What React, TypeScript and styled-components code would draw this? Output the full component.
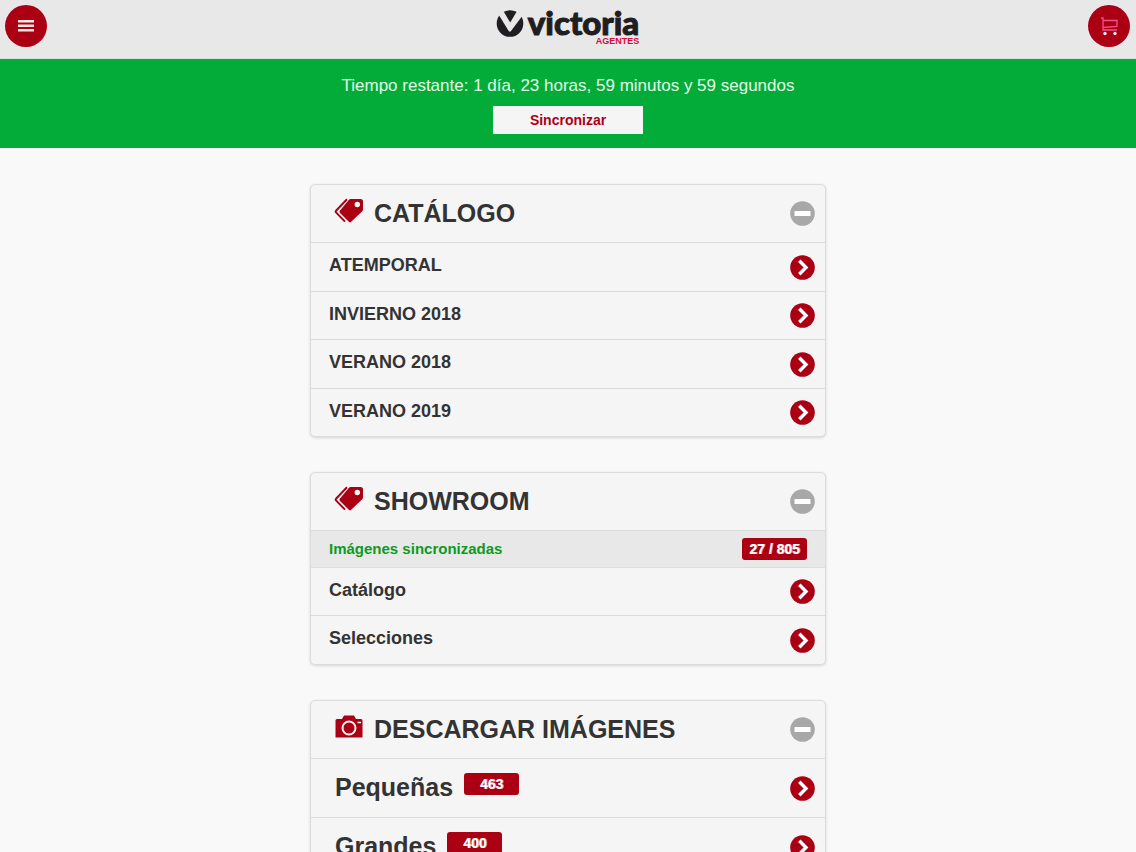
import React from 'react';
import styled, { createGlobalStyle } from 'styled-components';

const RED = '#ab0014';

const GlobalStyle = createGlobalStyle`
  * { box-sizing: border-box; }
  body {
    margin: 0;
    background: #faf9fa;
    color: #333;
    font-family: "Liberation Sans", Arial, sans-serif;
    font-size: 17px;
  }
`;

const Header = styled.header`
  display: grid;
  grid-template-columns: 1fr auto 1fr;
  align-items: start;
  height: 59px;
  padding: 5px 6px 0 5px;
  background: #e9e8e9;
  border-bottom: 1px solid #cfe8d6;
`;

const RoundButton = styled.button<{ $end?: boolean }>`
  display: flex;
  align-items: center;
  justify-content: center;
  justify-self: ${(p) => (p.$end ? 'end' : 'start')};
  width: 42px;
  height: 42px;
  padding: 0;
  border: 0;
  border-radius: 50%;
  background: ${RED};
  cursor: pointer;
`;

const Logo = styled.a`
  display: flex;
  align-items: flex-start;
  gap: 4px;
  padding-top: 3px;
  color: #201e22;
  text-decoration: none;
`;

const LogoWords = styled.span`
  display: flex;
  flex-direction: column;
  align-items: flex-end;
`;

const LogoName = styled.span`
  font: 900 33px/28px Lato, sans-serif;
  -webkit-text-stroke: 1px #201e22;
`;

const LogoTag = styled.span`
  color: #d80a3c;
  font: 700 9px/10px "Liberation Sans", Arial, sans-serif;
`;

const Banner = styled.section`
  display: flex;
  flex-direction: column;
  align-items: center;
  gap: 10px;
  padding: 17px 16px 14px;
  background: #03ac38;
`;

const Remaining = styled.p`
  margin: 0;
  color: #e4fbe6;
  line-height: 20px;
  text-align: center;
`;

const SyncButton = styled.button`
  width: 150px;
  height: 28px;
  padding: 0;
  border: 0;
  background: #f6f5f6;
  color: ${RED};
  font: 700 14px/28px "Liberation Sans", Arial, sans-serif;
  cursor: pointer;
`;

const Main = styled.main`
  display: flex;
  flex-direction: column;
  gap: 35px;
  width: 100%;
  max-width: 516px;
  margin: 0 auto;
  padding: 36px 0;
`;

const Card = styled.section`
  overflow: hidden;
  border: 1px solid #dddcdd;
  border-radius: 5px;
  background: #f6f5f6;
  box-shadow: 0 1px 3px rgba(0, 0, 0, 0.15);
`;

const CardTitle = styled.h2`
  margin: 0;
  font-size: 25px;
  line-height: 28px;
`;

const CardToggle = styled.button`
  display: flex;
  align-items: center;
  gap: 10px;
  width: 100%;
  height: 57px;
  padding: 0 10px 0 23px;
  border: 0;
  background: none;
  color: inherit;
  font: inherit;
  text-align: left;
  cursor: pointer;
`;

const CardIcon = styled.span`
  display: flex;
  height: 32px;
`;

const Label = styled.span`
  flex: 1;
  padding-bottom: 2px;
`;

const List = styled.ul`
  margin: 0;
  padding: 0;
  list-style: none;
`;

const Item = styled.li<{ $size?: 'large' | 'status' }>`
  height: ${(p) => (p.$size === 'large' ? 59 : p.$size === 'status' ? 37 : 48)}px;
  border-top: 1px solid #dddcdd;
  ${(p) => !p.$size && '&:nth-child(odd) { height: 49px; }'}
`;

const RowLink = styled.a<{ $large?: boolean }>`
  display: flex;
  align-items: center;
  height: 100%;
  padding: 0 10px 0 ${(p) => (p.$large ? 24 : 18)}px;
  color: inherit;
  font-size: ${(p) => (p.$large ? 25 : 18)}px;
  font-weight: 700;
  line-height: 28px;
  text-decoration: none;

  ${Label} {
    display: flex;
    gap: 11px;
    padding-bottom: ${(p) => (p.$large ? 2 : 4)}px;
  }
`;

const Status = styled.div`
  display: flex;
  align-items: center;
  height: 100%;
  padding: 0 18px;
  background: #e9e8e9;
  color: #0a9c1c;
  font-size: 15px;
  font-weight: 700;
`;

const Badge = styled.span<{ $wide?: boolean }>`
  width: ${(p) => (p.$wide ? 65 : 55)}px;
  height: 22px;
  border-radius: 3px;
  background: ${RED};
  color: #fff;
  font-size: 14px;
  font-weight: 700;
  line-height: 22px;
  text-align: center;
  text-shadow: 1px 0 0 rgba(255, 255, 255, 0.6);
`;

const TagsIcon = () => (
  <svg width="30" height="26" viewBox="0 0 30 26" aria-hidden="true">
    <path
      fill={RED}
      fillRule="evenodd"
      d="M16.500 1H26.500Q29 1 29 3.500V11.500Q29 12.500 28.300 13.200L17.200 23.800Q16 25 14.800 23.800L6 15Q4.800 13.800 6 12.600L15 1.700Q15.600 1 16.500 1ZM23.300 3.800A2.700 2.700 0 1 0 23.300 9.200A2.700 2.700 0 1 0 23.300 3.800Z"
    />
    <path d="M13 1.300L2 12.800Q1.300 13.600 2 14.400L11 23.600" fill="none" stroke={RED} strokeWidth="2" />
  </svg>
);

const CameraIcon = () => (
  <svg width="30" height="26" viewBox="0 0 30 26" aria-hidden="true">
    <path fill={RED} d="M3 5H8L10 1.500H20L22 5H27Q28.500 5 28.500 6.500V23.500H1.500V6.500Q1.500 5 3 5Z" />
    <circle cx="15" cy="14" r="6.500" fill="none" stroke="#f6f5f6" strokeWidth="2" />
    <path d="M23.500 8.500H27" stroke="#f6f5f6" strokeWidth="1.600" />
  </svg>
);

const MinusIcon = () => (
  <svg width="25" height="25" viewBox="0 0 25 25" aria-hidden="true">
    <circle cx="12.500" cy="12.500" r="12.300" fill="#a9a8a9" />
    <path d="M4.500 12.500H20.500" stroke="#fff" strokeWidth="4.800" />
  </svg>
);

const ArrowIcon = () => (
  <svg width="25" height="25" viewBox="0 0 25 25" aria-hidden="true">
    <circle cx="12.500" cy="12.500" r="12.300" fill={RED} />
    <path d="M9.300 5.700L16 12.500L9.300 19.300" fill="none" stroke="#fff" strokeWidth="3.400" />
  </svg>
);

const MenuIcon = () => (
  <svg width="16" height="14" viewBox="0 0 16 14" aria-hidden="true">
    <path d="M0 2.200H16M0 6.700H16M0 11.200H16" stroke="#fbe6e2" strokeWidth="2.400" />
  </svg>
);

const CartIcon = () => (
  <svg width="20" height="20" viewBox="0 0 20 20" aria-hidden="true">
    <path
      d="M2 2H4V14H18M4 4.500H18V10.500L4 11.500"
      fill="none"
      stroke="#f0508a"
      strokeWidth="1.300"
    />
    <circle cx="6" cy="17.500" r="1.700" fill="#ffe0e8" />
    <circle cx="16" cy="17.500" r="1.700" fill="#ffe0e8" />
  </svg>
);

const LogoMark = () => (
  <svg width="28" height="30" viewBox="0 0 28 30" aria-hidden="true">
    <circle cx="14" cy="15.500" r="13.300" fill="#201e22" />
    <path fill="#e9e8e9" d="M1 4L13 23.500H14.600L27 7V0H2Z" />
    <path fill="#201e22" d="M7.800 3.800Q14 0.600 20.600 3.800L14.200 14.500Z" />
  </svg>
);

type Row = { label: string; count?: number };
type Section = {
  title: string;
  icon: React.ReactNode;
  status?: { label: string; value: string };
  large?: boolean;
  rows: Row[];
};

const sections: Section[] = [
  {
    title: 'CATÁLOGO',
    icon: <TagsIcon />,
    rows: [
      { label: 'ATEMPORAL' },
      { label: 'INVIERNO 2018' },
      { label: 'VERANO 2018' },
      { label: 'VERANO 2019' },
    ],
  },
  {
    title: 'SHOWROOM',
    icon: <TagsIcon />,
    status: { label: 'Imágenes sincronizadas', value: '27 / 805' },
    rows: [{ label: 'Catálogo' }, { label: 'Selecciones' }],
  },
  {
    title: 'DESCARGAR IMÁGENES',
    icon: <CameraIcon />,
    large: true,
    rows: [
      { label: 'Pequeñas', count: 463 },
      { label: 'Grandes', count: 400 },
    ],
  },
];

export default function App() {
  return (
    <>
      <GlobalStyle />
      <Header>
        <RoundButton type="button" aria-label="Menú">
          <MenuIcon />
        </RoundButton>
        <Logo href="#">
          <LogoMark />
          <LogoWords>
            <LogoName>victoria</LogoName>
            <LogoTag>AGENTES</LogoTag>
          </LogoWords>
        </Logo>
        <RoundButton type="button" aria-label="Carrito" $end>
          <CartIcon />
        </RoundButton>
      </Header>
      <Banner>
        <Remaining>Tiempo restante: 1 día, 23 horas, 59 minutos y 59 segundos</Remaining>
        <SyncButton type="button">Sincronizar</SyncButton>
      </Banner>
      <Main>
        {sections.map((s) => (
          <Card key={s.title}>
            <CardTitle>
              <CardToggle type="button" aria-expanded="true">
                <CardIcon>{s.icon}</CardIcon>
                <Label>{s.title}</Label>
                <MinusIcon />
              </CardToggle>
            </CardTitle>
            <List>
              {s.status && (
                <Item $size="status">
                  <Status>
                    <Label>{s.status.label}</Label>
                    <Badge $wide>{s.status.value}</Badge>
                  </Status>
                </Item>
              )}
              {s.rows.map((r) => (
                <Item key={r.label} $size={s.large ? 'large' : undefined}>
                  <RowLink href="#" $large={s.large}>
                    <Label>
                      {r.label}
                      {r.count !== undefined && <Badge>{r.count}</Badge>}
                    </Label>
                    <ArrowIcon />
                  </RowLink>
                </Item>
              ))}
            </List>
          </Card>
        ))}
      </Main>
    </>
  );
}
